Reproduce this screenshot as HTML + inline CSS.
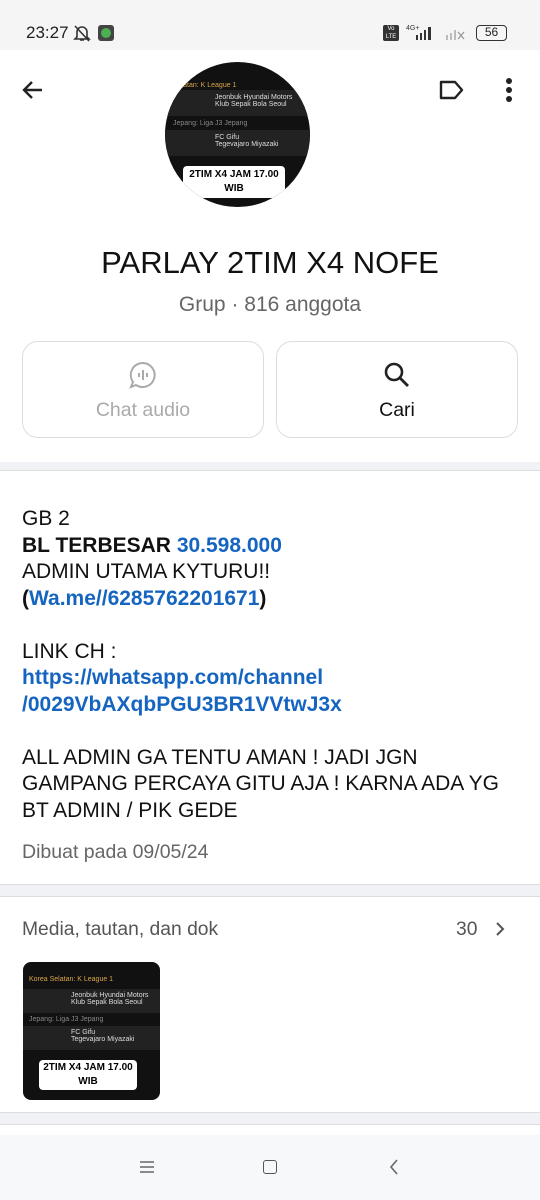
<!DOCTYPE html>
<html><head><meta charset="utf-8"><style>
*{margin:0;padding:0;box-sizing:border-box}
body{width:540px;height:1200px;background:#f0f2f5;font-family:"Liberation Sans",sans-serif;position:relative;overflow:hidden;color:#111}
.abs{position:absolute}
.thumb{background:#111;overflow:hidden;color:#ddd;font-size:7px}
.row{position:absolute;left:0;right:0;background:#222;}
.lbl{position:absolute;background:#fff;color:#000;font-weight:bold;text-align:center;border-radius:4px}
a{color:#1565c0;font-weight:bold;text-decoration:none}
</style></head><body>
<div class="abs" style="left:0;top:0;width:540px;height:50px;background:#f5f5f5"></div>
<div class="abs" style="left:26px;top:23px;font-size:17px;color:#222">23:27</div>
<svg class="abs" style="left:72px;top:23px" width="20" height="20" viewBox="0 0 20 20"><path d="M5 14V9a5 5 0 0 1 10 0v5l2 2H3z M8 17h4 M3 3l14 15" stroke="#333" stroke-width="1.6" fill="none"/></svg>
<div class="abs" style="left:98px;top:25px;width:16px;height:16px;background:#444;border-radius:3px"><div style="margin:3px;width:10px;height:10px;border-radius:50%;background:#4caf50"></div></div>
<div class="abs" style="left:383px;top:25px;width:16px;height:16px;background:#333;border-radius:2px;color:#fff;font-size:6px;text-align:center;line-height:8px">Vo<br>LTE</div>
<svg class="abs" style="left:404px;top:22px" width="68" height="20"><text x="2" y="8" font-size="7" fill="#333" font-family="Liberation Sans">4G+</text><rect x="12" y="13" width="2" height="5" fill="#333"/><rect x="16" y="11" width="2" height="7" fill="#333"/><rect x="20" y="8" width="2" height="10" fill="#333"/><rect x="24" y="5" width="3" height="13" fill="#333"/><rect x="42" y="13" width="2" height="5" fill="#bbb"/><rect x="46" y="11" width="2" height="7" fill="#bbb"/><rect x="50" y="8" width="2" height="10" fill="#bbb"/><path d="M54 10l6 7M60 10l-6 7" stroke="#999" stroke-width="1.3"/></svg>
<div class="abs" style="left:476px;top:25px;width:31px;height:16px;border:1.5px solid #333;border-radius:4px;font-size:12px;text-align:center;line-height:13px;color:#222">56</div>
<div class="abs" style="left:0;top:50px;width:540px;height:412px;background:#fff"></div>
<svg class="abs" style="left:20px;top:77px" width="26" height="26" viewBox="0 0 26 26"><path d="M22 13H4M12 5l-8 8 8 8" stroke="#222" stroke-width="2.4" fill="none"/></svg>
<svg class="abs" style="left:438px;top:79px" width="28" height="22" viewBox="0 0 28 22"><path d="M3 3h14l7 8-7 8H3z" stroke="#222" stroke-width="2.4" fill="none" stroke-linejoin="round"/></svg>
<div class="abs" style="left:506px;top:78px;width:6px;height:6px;border-radius:50%;background:#222;box-shadow:0 9px 0 #222,0 18px 0 #222"></div>
<div class="abs thumb" style="left:165px;top:62px;width:145px;height:145px;border-radius:50%">
 <div style="position:absolute;left:8px;top:20px;color:#d9a64a">Selatan: K League 1</div>
 <div class="row" style="top:28px;height:26px"><div style="position:absolute;left:50px;top:4px">Jeonbuk Hyundai Motors<br>Klub Sepak Bola Seoul</div></div>
 <div style="position:absolute;left:8px;top:58px;color:#888">Jepang: Liga J3 Jepang</div>
 <div class="row" style="top:68px;height:26px"><div style="position:absolute;left:50px;top:4px">FC Gifu<br>Tegevajaro Miyazaki</div></div>
 <div class="lbl" style="left:18px;top:104px;width:102px;font-size:10px;line-height:14px;padding:2px">2TIM X4 JAM 17.00<br>WIB</div>
</div>
<div class="abs" style="left:0;top:245px;width:540px;text-align:center;font-size:31px;color:#111">PARLAY 2TIM X4 NOFE</div>
<div class="abs" style="left:0;top:293px;width:540px;text-align:center;font-size:21px;color:#666">Grup · 816 anggota</div>
<div class="abs" style="left:22px;top:341px;width:242px;height:97px;border:1px solid #ddd;border-radius:16px"></div>
<div class="abs" style="left:276px;top:341px;width:242px;height:97px;border:1px solid #ddd;border-radius:16px"></div>
<svg class="abs" style="left:128px;top:360px" width="30" height="30" viewBox="0 0 30 30"><path d="M15 3a12 12 0 1 1-7 22L3 27l2-5A12 12 0 0 1 15 3z" stroke="#aaa" stroke-width="2" fill="none"/><path d="M11 13v4M15 10v10M19 13v4" stroke="#aaa" stroke-width="2"/></svg>
<div class="abs" style="left:22px;top:399px;width:242px;text-align:center;font-size:19.5px;color:#aaa">Chat audio</div>
<svg class="abs" style="left:383px;top:361px" width="28" height="28" viewBox="0 0 28 28"><circle cx="11" cy="11" r="8" stroke="#222" stroke-width="2.6" fill="none"/><path d="M17 17l8 8" stroke="#222" stroke-width="2.8"/></svg>
<div class="abs" style="left:276px;top:399px;width:242px;text-align:center;font-size:19.5px;color:#111">Cari</div>
<div class="abs" style="left:0;top:470px;width:540px;height:415px;background:#fff;border-top:1px solid #ddd;border-bottom:1px solid #ddd"></div>
<div class="abs" style="left:22px;top:506px;font-size:21px;line-height:26.5px;color:#111;white-space:nowrap">
GB 2<br><b>BL TERBESAR</b> <a>30.598.000</a><br>ADMIN UTAMA KYTURU!!<br><b>(</b><a>Wa.me//6285762201671</a><b>)</b><br><br>LINK CH :<br><a>https://whatsapp.com/channel<br>/0029VbAXqbPGU3BR1VVtwJ3x</a><br><br>ALL ADMIN GA TENTU AMAN ! JADI JGN<br>GAMPANG PERCAYA GITU AJA ! KARNA ADA YG<br>BT ADMIN / PIK GEDE</div>
<div class="abs" style="left:22px;top:841px;font-size:19.5px;color:#666">Dibuat pada 09/05/24</div>
<div class="abs" style="left:0;top:896px;width:540px;height:217px;background:#fff;border-top:1px solid #ddd;border-bottom:1px solid #ddd"></div>
<div class="abs" style="left:22px;top:919px;font-size:19.3px;color:#555">Media, tautan, dan dok</div>
<div class="abs" style="left:456px;top:919px;font-size:19.3px;color:#555">30</div>
<svg class="abs" style="left:493px;top:920px" width="14" height="18" viewBox="0 0 14 18"><path d="M4 3l6 6-6 6" stroke="#555" stroke-width="2" fill="none"/></svg>
<div class="abs thumb" style="left:23px;top:962px;width:137px;height:138px;border-radius:8px">
 <div style="position:absolute;left:6px;top:14px;color:#d9a64a">Korea Selatan: K League 1</div>
 <div class="row" style="top:27px;height:24px"><div style="position:absolute;left:48px;top:3px">Jeonbuk Hyundai Motors<br>Klub Sepak Bola Seoul</div></div>
 <div style="position:absolute;left:6px;top:54px;color:#888">Jepang: Liga J3 Jepang</div>
 <div class="row" style="top:64px;height:24px"><div style="position:absolute;left:48px;top:3px">FC Gifu<br>Tegevajaro Miyazaki</div></div>
 <div class="lbl" style="left:16px;top:98px;width:98px;font-size:10px;line-height:14px;padding:1px">2TIM X4 JAM 17.00<br>WIB</div>
</div>
<div class="abs" style="left:0;top:1124px;width:540px;height:76px;background:#fff;border-top:1px solid #ddd"></div>
<div class="abs" style="left:0;top:1135px;width:540px;height:65px;background:#f7f8fa"></div>
<svg class="abs" style="left:138px;top:1158px" width="18" height="18"><path d="M2 4h14M2 9h14M2 14h14" stroke="#666" stroke-width="1.5"/></svg>
<div class="abs" style="left:263px;top:1160px;width:14px;height:14px;border:1.8px solid #555;border-radius:3px"></div>
<svg class="abs" style="left:386px;top:1158px" width="16" height="18"><path d="M11 2l-6 7 6 7" stroke="#666" stroke-width="1.6" fill="none"/></svg>
</body></html>
